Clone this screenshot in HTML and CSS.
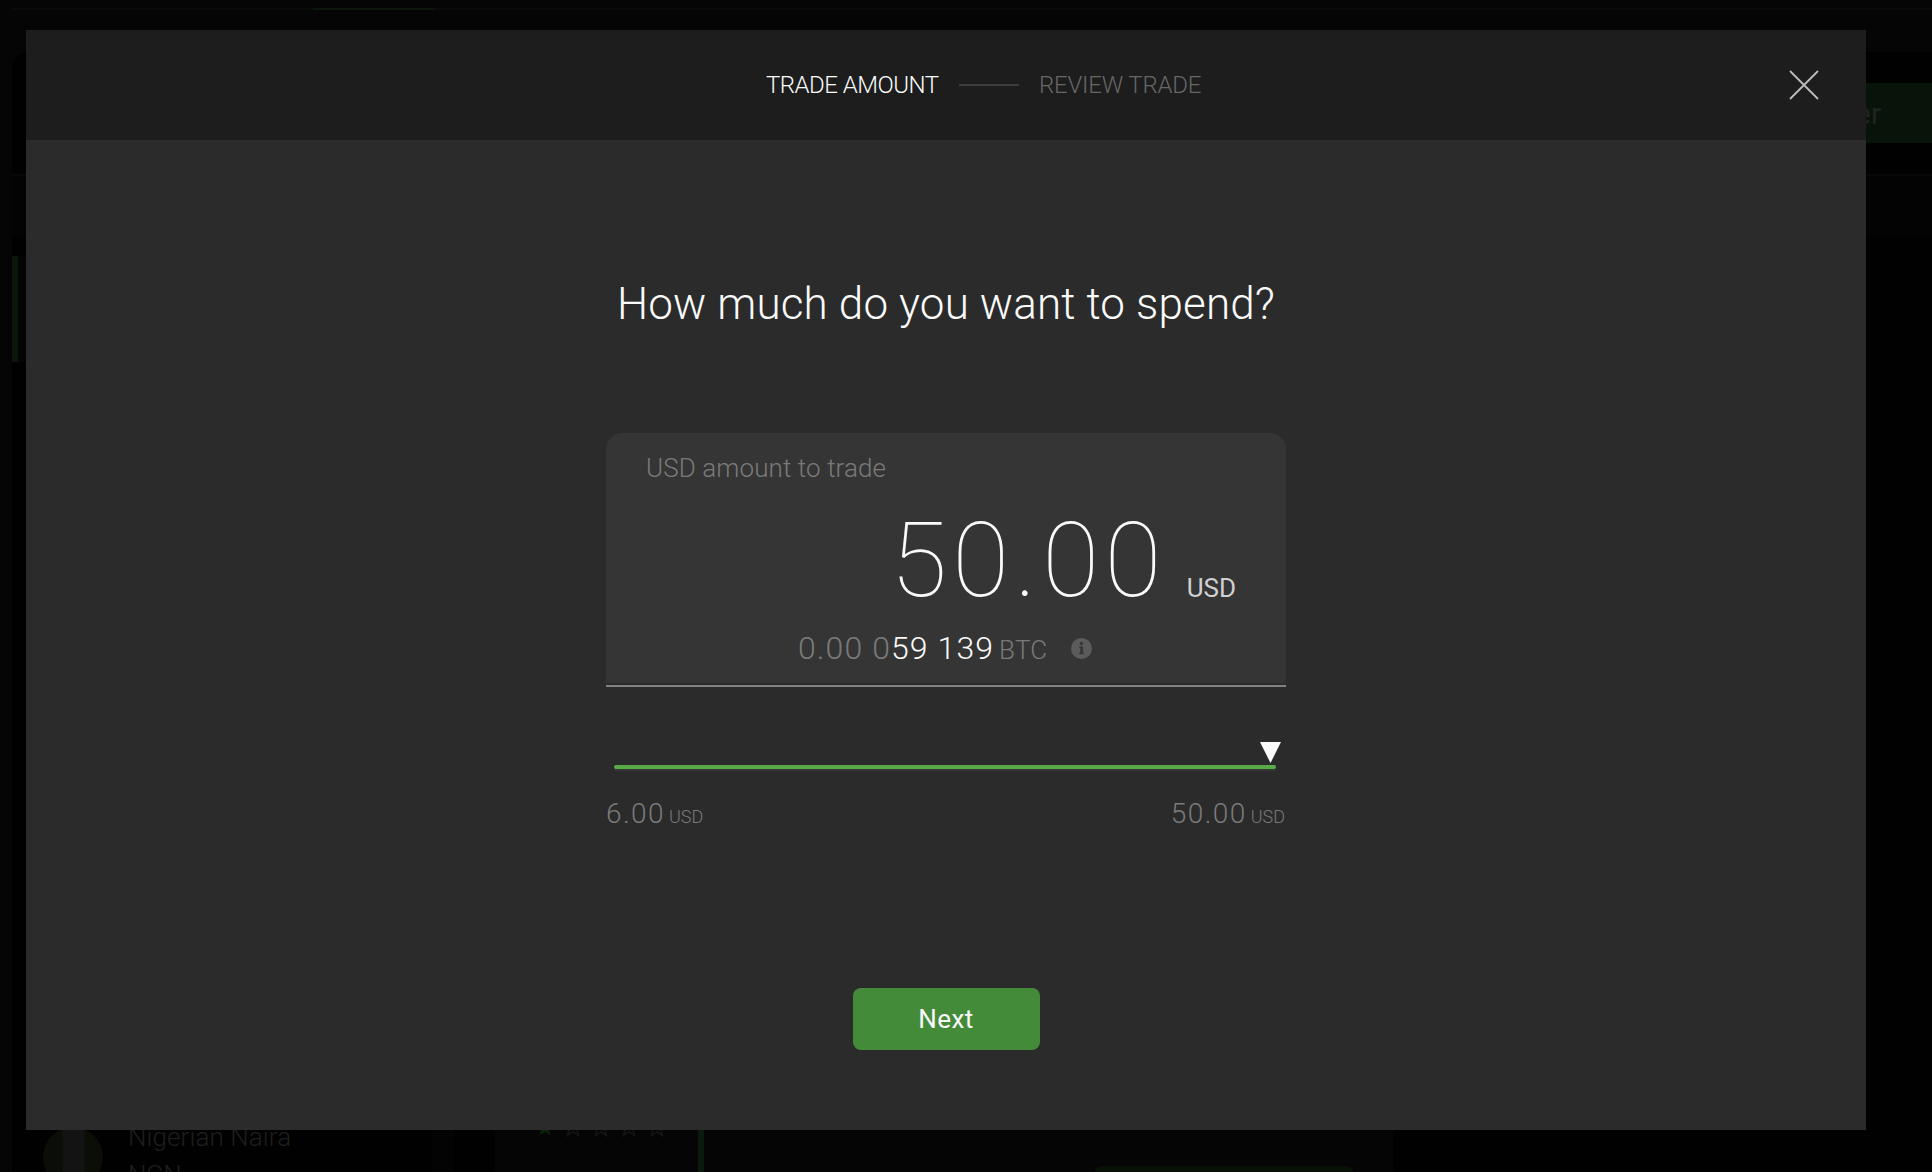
FILE: index.html
```html
<!DOCTYPE html>
<html lang="en">
<head>
<meta charset="utf-8">
<title>Trade amount</title>
<link rel="stylesheet" href="styles.css">
</head>
<body>
<div class="page" aria-hidden="true">
  <div class="tabs"><span class="tab-active"></span></div>
  <div class="board">
    <div class="board-head"><div class="offer-button">er</div></div>
    <div class="filters"></div>
    <div class="columns">
      <div class="currencies">
        <div class="currency currency-selected"></div>
        <div class="currency currency-last">
          <svg class="flag" viewBox="0 0 60 60"><circle cx="30" cy="30" r="30" fill="#0a0e07"/><path d="M19.5 2h22v56h-22z" fill="#131313"/></svg>
          <div class="currency-text"><div class="currency-name">Nigerian Naira</div><div class="currency-code">NGN</div></div>
        </div>
      </div>
      <div class="scrollbar"></div>
      <div class="offer">
        <svg class="stars" viewBox="0 0 140 20">
          <defs><path id="star" d="M10 1l2.3 6.6 6.7.1-5.4 4.2 2 6.7-5.6-4-5.6 4 2-6.7L1 7.7l6.7-.1z"/></defs>
          <use href="#star" fill="#0a220a"/>
          <g fill="none" stroke="#151515" stroke-width="1.5"><use href="#star" x="28"/><use href="#star" x="56"/><use href="#star" x="84"/><use href="#star" x="112"/></g>
        </svg>
        <div class="offer-rule"></div>
        <div class="offer-action"></div>
      </div>
    </div>
  </div>
</div>

<main class="modal">
  <header class="modal-head">
    <div class="steps">
      <span class="step step-current">TRADE AMOUNT</span>
      <span class="step-line"></span>
      <span class="step step-next">REVIEW TRADE</span>
    </div>
    <svg class="close" viewBox="0 0 30 30"><path d="M1 1l28 28M29 1L1 29" stroke="#bdbdbd" stroke-width="1.8" fill="none"/></svg>
  </header>
  <section class="modal-body">
    <h1 class="title">How much do you want to spend?</h1>
    <div class="field">
      <div class="field-main">
        <div class="field-label"><span>USD amount to trade</span></div>
        <div class="amount"><span class="amount-value">50.00</span><span class="amount-unit">USD</span></div>
        <div class="converted">
          <span class="zeros">0.00 0</span><span class="digits">59 139</span><span class="coin">BTC</span>
          <svg class="info" viewBox="0 0 21 21"><circle cx="10.5" cy="10.5" r="10.5" fill="#5b5b5b"/><circle cx="10.5" cy="5.5" r="1.7" fill="#353535"/><path d="M8.300 8.500h3.700v6.200h1v1.500H8.300v-1.500h1V10h-1z" fill="#353535"/></svg>
        </div>
      </div>
      <div class="field-line"></div>
    </div>
    <div class="slider">
      <svg class="thumb" viewBox="0 0 21 21"><path d="M0 0h21L10.500 21z" fill="#fafafa"/></svg>
      <div class="track"></div>
    </div>
    <div class="limits">
      <div class="limit"><span class="limit-value">6.00</span><span class="limit-unit">USD</span></div>
      <div class="limit"><span class="limit-value">50.00</span><span class="limit-unit">USD</span></div>
    </div>
    <button class="next" type="button">Next</button>
  </section>
</main>
</body>
</html>
```

FILE: styles.css
```css
* { box-sizing: border-box; }
body {
  margin: 0;
  width: 1932px;
  height: 1172px;
  overflow: hidden;
  position: relative;
  background: #050505;
  color: #fafafa;
  font-family: Roboto, "Liberation Sans", sans-serif;
  font-weight: 300;
}

/* dimmed page behind the dialog */
.page { height: 1172px; padding-left: 12px; overflow: hidden; color: #1e1e1e; }
.tabs { display: flex; height: 10px; padding: 8px 0 0 301px; background: linear-gradient(#0a0a0a, #0a0a0a) 0 8px / 100% 2px no-repeat; }
.tab-active { width: 122px; height: 2px; background: #0a170a; }
.board { margin-top: 42px; height: 1120px; background: #010101; border-top-left-radius: 16px; }
.board-head { display: flex; justify-content: flex-end; padding-top: 31px; height: 124px; border-bottom: 2px solid #080808; }
.offer-button { width: 100px; height: 60px; padding-left: 23px; background: #08140a; font-size: 30px; font-weight: 400; line-height: 61px; color: #202420; }
.filters { height: 60px; background: #030303; }
.columns { display: flex; margin-top: 20px; height: 916px; }
.currencies { width: 420px; }
.currency { height: 106px; }
.currency-selected { border-left: 6px solid #0a170a; background: #040404; }
.currency-last { display: flex; margin-top: 742px; padding: 23px 0 0 31px; gap: 25px; }
.flag { width: 60px; height: 60px; }
.currency-name { font-size: 26px; line-height: 30px; letter-spacing: .1px; margin-top: -5px; white-space: nowrap; }
.currency-code { font-size: 26px; line-height: 30px; letter-spacing: -.5px; margin-top: 8px; }
.scrollbar { width: 22px; background: #030303; }
.offer { display: flex; align-items: flex-end; margin-left: 41px; width: 898px; background: #050505; }
.stars { width: 140px; height: 20px; margin: 0 0 35px 40px; }
.offer-rule { width: 6px; height: 100%; margin-left: 23px; background: #0a1a0c; }
.offer-action { width: 258px; height: 6px; margin-left: 391px; background: #071204; border-radius: 6px 6px 0 0; }

.modal { position: absolute; left: 26px; top: 30px; width: 1840px; height: 1100px; background: #2b2b2b; }
.modal-head { display: flex; align-items: center; height: 110px; padding: 0 47px 0 740px; background: #1d1d1d; }
.steps { display: flex; align-items: center; }
.step { font-size: 24px; line-height: 28px; white-space: nowrap; }
.step-current { width: 173px; letter-spacing: -.5px; }
.step-line { width: 60px; height: 2px; margin: 0 20px 0 20px; background: #3d3d3d; }
.step-next { width: 160px; letter-spacing: -.2px; color: #666; }
.close { width: 30px; height: 30px; margin-left: auto; }

.modal-body { display: flex; flex-direction: column; align-items: center; }
.title { margin: 138px 0 0; font-size: 44px; line-height: 52px; font-weight: 300; letter-spacing: .15px; }
.field { width: 680px; height: 254px; margin-top: 103px; }
.field-main { height: 250px; padding: 20px 50px 0 40px; border-radius: 16px 16px 0 0; background: #353535; }
.field-line { height: 2px; margin-top: 2px; background: #828282; }
.field-label { height: 30px; font-size: 26px; line-height: 30px; letter-spacing: .1px; color: #7a7a7a; }
.amount { display: flex; justify-content: flex-end; align-items: baseline; height: 122px; margin-top: 17px; line-height: 122px; }
.amount-value { font-size: 104px; font-weight: 100; letter-spacing: 5.3px; }
.amount-unit { position: relative; top: 1px; margin-left: 20px; font-size: 26px; font-weight: 400; color: #d0d0d0; }
.converted { display: flex; align-items: baseline; height: 38px; margin-top: 7px; padding-left: 152px; font-size: 32px; line-height: 38px; white-space: nowrap; }
.zeros { width: 93px; letter-spacing: 1.1px; color: #7a7a7a; }
.digits { width: 108px; letter-spacing: 1.1px; }
.coin { width: 72px; font-size: 26px; letter-spacing: .3px; color: #7a7a7a; }
.info { width: 21px; height: 21px; margin-bottom: 3px; }

.slider { width: 662px; height: 29px; margin: 55px 2px 0 0; }
.thumb { display: block; width: 21px; height: 21px; margin-left: 646px; }
.track { height: 4px; margin-top: 2px; border-radius: 2px; background: #58ab48; box-shadow: 0 2px 0 #373737; }
.limits { display: flex; justify-content: space-between; width: 680px; height: 36px; margin-top: 25px; padding: 0 1px 0 0; color: #7a7a7a; }
.limit { display: flex; align-items: baseline; line-height: 36px; }
.limit-value { font-size: 28px; letter-spacing: 1.4px; }
.limit-unit { margin-left: 4px; font-size: 18px; }
.next { width: 187px; height: 62px; margin-top: 156px; padding: 0; border: 0; border-radius: 8px; background: #448b39; color: #fafafa; font: 400 26px/60px Roboto, "Liberation Sans", sans-serif; letter-spacing: .5px; }
```
